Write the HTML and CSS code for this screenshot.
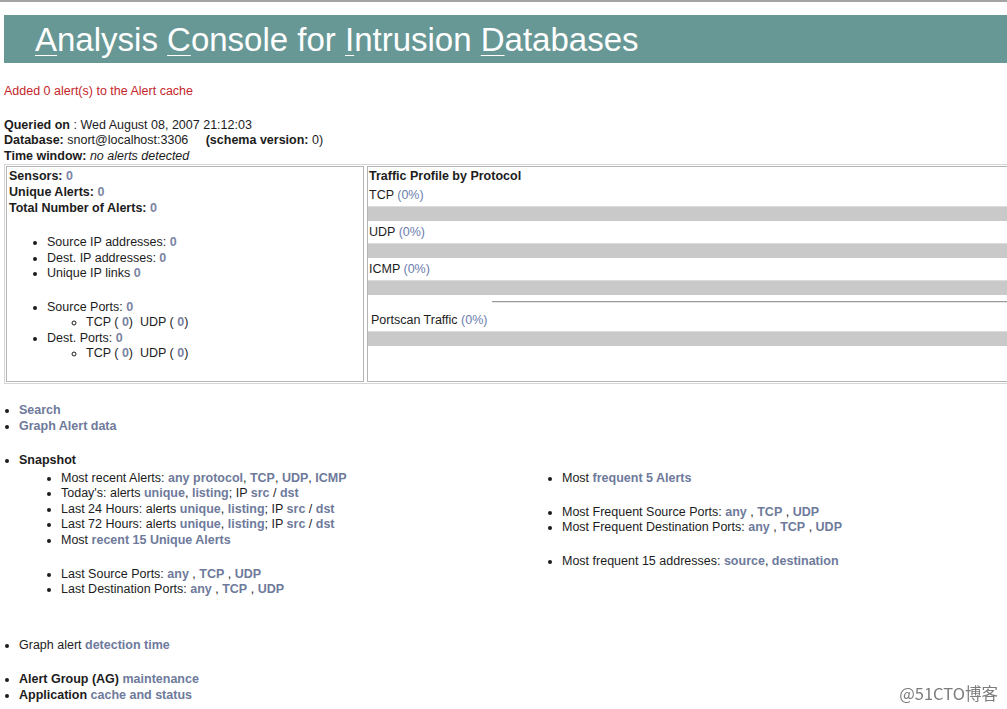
FILE: index.html
```html
<!DOCTYPE html>
<html>
<head>
  <meta charset="utf-8">
  <title>ACID - Analysis Console for Intrusion Databases</title>
  <link rel="stylesheet" href="styles.css">
</head>
<body>
  <div class="page">
    <div class="title"><u>A</u>nalysis <u>C</u>onsole for <u>I</u>ntrusion <u>D</u>atabases</div>

    <div class="notice">Added 0 alert(s) to the Alert cache</div>

    <div class="query">
      <div><b>Queried on</b> : Wed August 08, 2007 21:12:03</div>
      <div><b>Database:</b> snort@localhost:3306 &nbsp;&nbsp;&nbsp;&nbsp;<b>(schema version:</b> 0)</div>
      <div><b>Time window:</b> <i>no alerts detected</i></div>
    </div>

    <div class="stats">
      <div class="cell summary">
        <div class="line"><b>Sensors:</b> <a class="num" href="#">0</a></div>
        <div class="line"><b>Unique Alerts:</b> <a class="num" href="#">0</a></div>
        <div class="line"><b>Total Number of Alerts:</b> <a class="num" href="#">0</a></div>

        <ul class="counts">
          <li>Source IP addresses: <a class="num" href="#">0</a></li>
          <li>Dest. IP addresses: <a class="num" href="#">0</a></li>
          <li>Unique IP links <a class="num" href="#">0</a></li>
        </ul>

        <ul class="counts">
          <li>Source Ports: <a class="num" href="#">0</a>
            <ul class="sub">
              <li>TCP ( <a class="num" href="#">0</a>) &nbsp;UDP ( <a class="num" href="#">0</a>)</li>
            </ul>
          </li>
          <li>Dest. Ports: <a class="num" href="#">0</a>
            <ul class="sub">
              <li>TCP ( <a class="num" href="#">0</a>) &nbsp;UDP ( <a class="num" href="#">0</a>)</li>
            </ul>
          </li>
        </ul>
      </div>

      <div class="cell traffic">
        <div class="line"><b>Traffic Profile by Protocol</b></div>
        <div class="proto">TCP <a class="pct" href="#">(0%)</a></div>
        <div class="bar"></div>
        <div class="proto">UDP <a class="pct" href="#">(0%)</a></div>
        <div class="bar"></div>
        <div class="proto">ICMP <a class="pct" href="#">(0%)</a></div>
        <div class="bar"></div>
        <hr class="rule">
        <div class="proto portscan">Portscan Traffic <a class="pct" href="#">(0%)</a></div>
        <div class="bar"></div>
      </div>
    </div>

    <ul class="menu">
      <li><a href="#">Search</a></li>
      <li><a href="#">Graph Alert data</a></li>
      <li class="sep"><b>Snapshot</b>
        <div class="snapshot">
          <ul class="snap-list">
            <li>Most recent Alerts: <a href="#">any protocol</a>, <a href="#">TCP</a>, <a href="#">UDP</a>, <a href="#">ICMP</a></li>
            <li>Today's: alerts <a href="#">unique</a>, <a href="#">listing</a>; IP <a href="#">src</a> / <a href="#">dst</a></li>
            <li>Last 24 Hours: alerts <a href="#">unique</a>, <a href="#">listing</a>; IP <a href="#">src</a> / <a href="#">dst</a></li>
            <li>Last 72 Hours: alerts <a href="#">unique</a>, <a href="#">listing</a>; IP <a href="#">src</a> / <a href="#">dst</a></li>
            <li>Most <a href="#">recent 15 Unique Alerts</a></li>
            <li class="sep">Last Source Ports: <a href="#">any</a> , <a href="#">TCP</a> , <a href="#">UDP</a></li>
            <li>Last Destination Ports: <a href="#">any</a> , <a href="#">TCP</a> , <a href="#">UDP</a></li>
          </ul>
          <ul class="snap-list">
            <li>Most <a href="#">frequent 5 Alerts</a></li>
            <li class="sep">Most Frequent Source Ports: <a href="#">any</a> , <a href="#">TCP</a> , <a href="#">UDP</a></li>
            <li>Most Frequent Destination Ports: <a href="#">any</a> , <a href="#">TCP</a> , <a href="#">UDP</a></li>
            <li class="sep">Most frequent 15 addresses: <a href="#">source</a>, <a href="#">destination</a></li>
          </ul>
        </div>
      </li>
      <li class="far">Graph alert <a href="#">detection time</a></li>
      <li class="sep"><b>Alert Group (AG)</b> <a href="#">maintenance</a></li>
      <li><b>Application</b> <a href="#">cache and status</a></li>
    </ul>
  </div>

  <div class="watermark">@51CTO博客</div>
</body>
</html>
```

FILE: styles.css
```css
html, body {
  overflow: hidden;
}

body {
  margin: 0;
  padding: 0 0 0 4px;
  border-top: 2px solid #a4a4a4;
  font-family: Arial, "Liberation Sans", sans-serif;
  font-size: 12.5px;
  line-height: 15.5px;
  color: #1c1c1c;
  background-color: #fff;
}

.page {
  width: 1016px;
}

a {
  color: #6e7a9b;
  font-weight: bold;
  text-decoration: none;
}

ul {
  margin: 0;
}

/* title bar */
.title {
  margin-top: 13px;
  height: 48px;
  padding-left: 31px;
  background-color: #689896;
  color: #fff;
  font-size: 33px;
  line-height: 50px;
}

.title u {
  text-decoration-thickness: 1px;
  text-underline-offset: 4px;
}

.notice {
  margin-top: 21px;
  color: #c4262b;
}

.query {
  margin-top: 18px;
}

/* stats table */
.stats {
  display: grid;
  grid-template-columns: 358px 1fr;
  column-gap: 3px;
  padding: 1px;
  border: 1px solid #d6d6d6;
}

.cell {
  border: 1px solid #b4b4b4;
  padding: 1px 2px;
}

.line {
  line-height: 16px;
}

.num {
  color: #7a84a3;
}

.counts {
  margin: 19px 0 18px;
  padding-left: 38px;
}

.counts + .counts {
  margin-top: 17px;
}

.sub {
  padding-left: 39px;
  list-style: circle;
}

.traffic {
  padding: 1px 0 0 1px;
  border-right: none;
}

.proto {
  margin-top: 3px;
  line-height: 16px;
}

.pct {
  font-weight: normal;
  color: #6d7dae;
}

.bar {
  margin: 3px 0 0 -1px;
  height: 14px;
  border-top: 1px solid #dcdcdc;
  background-color: #c9c9c9;
}

.rule {
  margin: 6px 0 0 123px;
  height: 0;
  border: none;
  border-top: 1px solid #9a9a9a;
  border-bottom: 1px solid #e6e6e6;
}

.portscan {
  margin-top: 9px;
  padding-left: 2px;
}

/* lower menu */
.menu {
  margin-top: 18px;
  padding-left: 15px;
  line-height: 16px;
}

.menu .sep {
  margin-top: 18px;
}

.menu .far {
  margin-top: 39px;
}

.snapshot {
  margin-top: 3px;
  display: grid;
  grid-template-columns: 501px 1fr;
  line-height: 15.5px;
}

.snap-list {
  padding-left: 42px;
  list-style: disc;
}

.snap-list .sep {
  margin-top: 18.5px;
}

.watermark {
  position: fixed;
  right: 9px;
  bottom: 8px;
  font-family: "Noto Sans CJK SC", sans-serif;
  font-size: 16.5px;
  color: #7c7c7c;
}
```
